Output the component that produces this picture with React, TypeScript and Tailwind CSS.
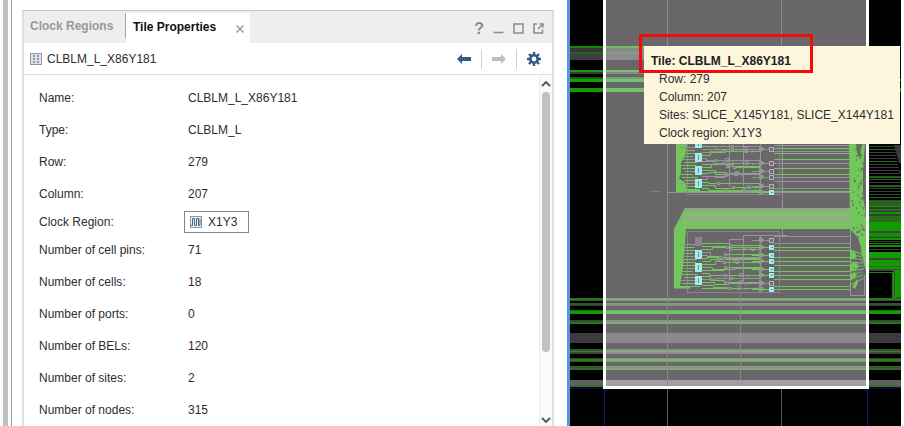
import React from "react";

const GREEN = "#72c75b";
const GREY = "#98939a";
const CYAN = "#a3ece9";

type Band = [y: number, height: number, color: string];

const leftBands: Band[] = [
  [46, 2, "#128a06"], [48, 4, "#38363a"], [52, 2, "#1c6a12"], [54, 6, "#403e42"],
  [70, 2, "#14a006"], [72, 2, "#39373b"], [77, 2, "#1c5c14"], [79, 3, "#12a004"], [88, 4, "#129c04"],
];

const bottomBands: Band[] = [
  [298, 1, "#2a7418"], [299, 1, "#178c08"], [300, 1, "#444"], [303, 2, "#375031"], [305, 1, "#2c4426"],
  [310, 1, "#167c0a"], [311, 3, "#129c04"], [320, 2, "#3c443a"], [322, 2, "#1f7c10"], [333, 10, "#3d3b3f"],
  [349, 2, "#44483f"], [351, 1, "#22900c"], [352, 2, "#3d453a"], [358, 1, "#36482f"], [359, 2, "#228010"],
  [361, 1, "#39532f"], [366, 1, "#24780f"], [367, 1, "#3c443a"], [368, 2, "#36632c"],
  [380, 5, "#626063"], [385, 2, "#3b6e2d"], [387, 2, "#080a40"],
];

const rightBands: Band[] = [
  [201, 1, "#168806"], [202, 1, "#303d2c"], [203, 1, "#128006"], [204, 2, "#29611b"], [206, 1, "#149402"],
  [207, 2, "#383a37"], [209, 2, "#207313"], [211, 1, "#353436"], [212, 2, "#149402"], [214, 2, "#393a39"],
  [216, 1, "#158408"], [217, 5, "#2e6a1c"], [222, 9, "#129c02"], [231, 2, "#3c4638"], [233, 4, "#129002"],
  [237, 1, "#393739"], [238, 2, "#149402"], [241, 1, "#39373a"], [243, 1, "#129402"], [245, 2, "#149402"],
  [249, 1, "#3d3b3e"], [252, 6, "#129c02"], [258, 2, "#40433e"], [260, 6, "#129c02"], [266, 1, "#276716"],
  [267, 2, "#129c02"], [269, 2, "#444245"],
];

const upperLines: Band[] = [
  [145, 1, GREY], [148, 1, GREEN], [151, 1, GREY], [153, 1, GREEN], [159, 1, GREEN], [163, 1, GREY], [168, 1, GREEN],
  [174, 1, GREEN], [177, 1, GREY], [181, 1, GREY], [188, 1, GREY], [191, 1, GREEN],
];

const lowerLines: Band[] = [
  [236, 1, GREY], [243, 1, GREY], [247, 1, GREEN], [250, 1, GREEN], [257, 1, GREEN], [261, 1, GREEN], [265, 1, GREEN],
  [271, 1, GREEN], [275, 1, GREEN], [279, 1, GREEN], [286, 1, GREEN], [289, 1, GREEN],
];

function Bands({ bands, x, width }: { bands: Band[]; x: number; width: number }) {
  return (
    <>
      {bands.map(([y, h, color]) => (
        <rect key={y} x={x} y={y} width={width} height={h} fill={color} />
      ))}
    </>
  );
}

function seeded(seed: number) {
  let s = seed;
  return () => {
    s = (s * 16807) % 2147483647;
    return s / 2147483647;
  };
}

/* Orthogonal nets between the LUT column and the flip-flop column. */
function Wiring({ top, bottom, seed }: { top: number; bottom: number; seed: number }) {
  const next = seeded(seed);
  for (let i = 0; i < 5; i++) next();
  const nets: React.ReactNode[] = [];
  const gates: React.ReactNode[] = [];
  for (let y = top; y <= bottom; y += 3) {
    const a = Math.round(706 + next() * 10);
    const b = Math.round(a + 8 + next() * 14);
    const c = Math.round(b + 8 + next() * 16);
    const clamp = (v: number) => Math.min(bottom, Math.max(top, v));
    const y1 = clamp(y + Math.round(next() * 8 - 4));
    const y2 = clamp(y1 + Math.round(next() * 6 - 3));
    nets.push(
      <path key={y} d={`M702 ${y + 0.5}H${a + 0.5}V${y1 + 0.5}H${b + 0.5}V${y2 + 0.5}H760`} stroke={next() > 0.35 ? GREEN : GREY} />,
    );
    gates.push(<rect key={`a${y}`} x={b + 0.5} y={y2 - 0.5} width={2} height={2} stroke={GREY} fill="#716d72" />);
    if (next() > 0.5) {
      gates.push(<path key={`c${y}`} d={`M${c + 0.5} ${y2 - 1.5}h3v3h-3zM${c + 4} ${y2 + 0.5}h4v2`} stroke={GREY} />);
    }
  }
  return <g fill="none">{nets}{gates}</g>;
}

function Slice({ top, bottom, seed, cells, flops }: {
  top: number;
  bottom: number;
  seed: number;
  cells: [number, number, string][];
  flops: [number, string][];
}) {
  const stubs: number[] = [];
  for (let y = top + 13; y < bottom - 3; y += 3) stubs.push(y);
  return (
    <g>
      <rect x={687.5} y={top + 0.5} width={92} height={bottom - top} fill="none" stroke="#89848b" />
      {stubs.map((y, i) => (
        <rect key={y} x={680 + (i % 3) * 2} y={y} width={16 - (i % 2) * 3} height={1} fill={i % 4 ? GREEN : GREY} />
      ))}
      <Wiring top={top + 12} bottom={bottom - 4} seed={seed} />
      <path
        d={`M729.5 ${top + 8}V${bottom - 8}M730 ${top + 8.5}H744M743.5 ${top + 4}V${bottom - 8}M760.5 ${top + 5}V${bottom - 4}M744 ${top + 4.5}H787`}
        stroke={GREY}
        fill="none"
      />
      {flops.map(([y]) => (
        <path key={y} d={`M759.5 ${y - 2.5}l4 1.5v2l-4 1.5z`} stroke={GREY} fill="#7fae74" />
      ))}
      {flops.map(([y, color]) => (
        <path key={y} d={`M752 ${y + 0.5}h8M763 ${y + 0.5}h6`} stroke={color === CYAN ? GREEN : GREY} />
      ))}
      {cells.map(([y, h, color]) => (
        <g key={y}>
          <rect x={695.5} y={y + 0.5} width={6} height={h - 1} fill={color} stroke={color} />
          <path d={`M698.5 ${y + 2}v${h - 4}`} stroke="#66969b" />
        </g>
      ))}
      {flops.map(([y, color]) => (
        <g key={y}>
          <rect x={769.5} y={y - 1.5} width={4} height={4} fill={color} stroke={color === CYAN ? CYAN : "#b5b0b7"} />
          {color === CYAN && <rect x={771} y={y} width={2} height={1} fill="#59979c" />}
        </g>
      ))}
    </g>
  );
}

function Device() {
  const next = seeded(71);
  const specks = Array.from({ length: 46 }, () => {
    const y = 148 + next() * 88;
    return [851 + next() * 13, y, 0.8 + next() * 1.2];
  });
  const fine: number[] = [];
  for (let y = 146; y < 201; y += 3) fine.push(y);
  const spokes = [250, 254, 258, 262, 266, 271, 275, 280, 285];
  return (
    <svg
      className="block h-full w-full bg-black"
      viewBox="570 0 331 426"
      preserveAspectRatio="xMidYMin slice"
      role="img"
      aria-label="Device view"
    >
      <Bands bands={leftBands} x={570} width={170} />
      <Bands bands={bottomBands} x={570} width={331} />
      <Bands bands={rightBands} x={869} width={32} />

      {fine.map((y, i) => (
        <rect key={y} x={869} y={y} width={Math.min(32, 25 + i * 0.7)} height={1} fill={i % 6 === 5 ? "#1b7110" : "#3d3b3f"} />
      ))}
      <path d="M869 149.5H895.5V145M869 177.5H901M869 186.5H901M899 172H901" stroke="#168006" fill="none" />
      <path d="M894 145h7v18h-2z" fill="#3c3a3e" />
      <rect x={899} y={46} width={2} height={1} fill="#14a006" />
      <rect x={899} y={79} width={2} height={2} fill="#14a006" />
      <rect x={899} y={88} width={2} height={4} fill="#14a006" />
      <rect x={869} y={273} width={22} height={25} fill="#000" />
      <rect x={893} y={270} width={8} height={28} fill="#129c02" />
      <path d="M869 272.5H892.5V298" stroke="#277a18" fill="none" />
      <path d="M894.5 298V270M896 297.5H901" stroke="#47444a" fill="none" />
      <path d="M604.5 389V426M867.5 389V426" stroke="#15127c" />
      <path d="M667.5 389V426M781.5 389V426" stroke="#5a585c" />

      <rect x={605} y={0} width={262} height={387} fill="#fffaff" fillOpacity={0.41} />

      <path d="M667.5 0V387M781.5 0V46M740.5 293V380" stroke="#8d898f" />
      <path d="M782.5 144V208M782.5 229V235M668 192.5H850" stroke={GREY} />
      <path d="M650 191.5H660" stroke="#56a344" />

      <Bands bands={upperLines} x={774} width={77} />
      <Bands bands={lowerLines} x={774} width={77} />
      <path d="M687 191.5H850" stroke={GREEN} />

      <path d="M676 144H687L685 156 681 163V172L679 179 686 183V190H700V192H676Z" fill={GREEN} />
      <path d="M685 208 674 229V288.5H690V286H680L683 268 686 229H850V208Z" fill={GREEN} />
      <path d="M685 208H850V211H684Z" fill="#96a092" />
      <path d="M683 214.5H850M683 221.5H850" stroke="#83bc74" strokeWidth={2} />
      <path d="M682 218H850" stroke="#93ad8b" strokeWidth={4} />
      <path d="M681 224.5H850" stroke="#8bb47e" />

      <Slice
        top={134}
        bottom={194}
        seed={1201}
        cells={[[140, 8, CYAN], [153, 9, CYAN], [166, 9, CYAN], [179, 9, CYAN]]}
        flops={[[149, "#716d72"], [163, "#716d72"], [171, "#716d72"], [177, "#716d72"], [186, "#716d72"], [192, CYAN]]}
      />
      <Slice
        top={231}
        bottom={292}
        seed={907}
        cells={[[237, 9, "#8b868d"], [250, 9, CYAN], [263, 9, CYAN], [276, 9, CYAN]]}
        flops={[[240, "#716d72"], [247, CYAN], [255, CYAN], [261, CYAN], [269, CYAN], [275, CYAN], [283, "#716d72"], [289, CYAN]]}
      />

      <path d="M850.5 192V295.5H864.5V275" stroke={GREY} fill="none" />
      <path
        d="M849 144H856L857 152 860 160 861 148 863 144H865L863 172 863 196 866 215V270L862 262 861 248 858 238 850 229Z"
        fill={GREEN}
      />
      {specks.map(([x, y, s], i) => (
        <rect key={i} x={x} y={y} width={s} height={s + 0.4} fill={i % 3 ? "#5e7459" : "#777279"} />
      ))}
      <path d="M864 198l2 4M864 214l2 3M865 175v12M861 224l4 7" stroke="#706c71" />
      {spokes.map((y, i) => (
        <path key={y} d={`M850 ${y}L${862 + (i % 3)} ${254 + i * 3}`} stroke={GREEN} />
      ))}
      <path d="M850 250l5 2 2 5-7 3zM850 264l6-2 3 4-4 5h-5zM850 274l5-2 2 4-7 4zM852 287l5-8 1 4-3 6z" fill={GREEN} />
      <path d="M856 254l3 6M858 268l4-3M856 278l4-6M862 256l2 12M853 268l2 1" stroke="#716b73" />

      <path d="M604.5 0V387.5H867.5V0" stroke="#fff" strokeWidth={3} fill="none" />
    </svg>
  );
}

function TileIcon() {
  return (
    <svg width="12" height="12" viewBox="0 0 12 12" fill="none" aria-hidden="true">
      <rect x="0.5" y="0.5" width="11" height="11" fill="#dfe4ec" stroke="#8c97a8" />
      <path d="M3 2h2v2H3zM7 2h2v2H7zM3 5h2v2H3zM7 5h2v2H7zM3 8h2v2H3zM7 8h2v2H7z" fill="#8f98a0" />
    </svg>
  );
}

function RegionIcon() {
  return (
    <svg width="12" height="12" viewBox="0 0 12 12" fill="none" aria-hidden="true">
      <rect x="0.5" y="0.5" width="11" height="11" fill="#edf3fa" stroke="#8796a8" />
      <path d="M1 9.5h1.5v-7h2v7h2v-7h2v7h1.5v-7" stroke="#486480" />
    </svg>
  );
}

function Arrow({ right = false }: { right?: boolean }) {
  return (
    <svg width="14" height="10" viewBox="0 0 14 10" aria-hidden="true">
      <path
        d={right ? "M14 5 9 0V3H0V7H9V10Z" : "M0 5 5 0V3H14V7H5V10Z"}
        fill={right ? "#bebebe" : "#36598c"}
      />
    </svg>
  );
}

function Gear() {
  return (
    <svg width="14" height="14" viewBox="0 0 14 14" fill="none" stroke="#36598c" aria-hidden="true">
      <path d="M7 0V3M7 11V14M0 7H3M11 7H14M2 2L4 4M10 10L12 12M12 2L10 4M4 10L2 12" strokeWidth="2.4" />
      <circle cx="7" cy="7" r="3.7" strokeWidth="2.6" />
    </svg>
  );
}

function Chevron({ down = false }: { down?: boolean }) {
  return (
    <svg width="10" height="6" viewBox="0 0 10 6" fill="none" stroke="#555" strokeWidth="1.8" aria-hidden="true">
      <path d={down ? "M1 1l4 4 4-4" : "M1 5l4-4 4 4"} />
    </svg>
  );
}

const properties: [string, string][] = [
  ["Name", "CLBLM_L_X86Y181"],
  ["Type", "CLBLM_L"],
  ["Row", "279"],
  ["Column", "207"],
  ["Clock Region", "X1Y3"],
  ["Number of cell pins", "71"],
  ["Number of cells", "18"],
  ["Number of ports", "0"],
  ["Number of BELs", "120"],
  ["Number of sites", "2"],
  ["Number of nodes", "315"],
];

function PropertiesPanel() {
  return (
    <section className="mt-[10px] mr-[13px] ml-[10px] flex min-w-0 flex-1 flex-col border-x-2 border-t border-x-[#dedee2] border-t-[#c8c8c8]">
      <header className="flex h-8 shrink-0 items-stretch bg-[#eeeeef] text-xs font-bold">
        <div role="tablist" className="flex">
          <div className="flex w-[102px] pt-[2px] pb-[5px]">
            <button role="tab" aria-selected="false" className="w-full border-r border-[#a5a5a5] pl-[6px] text-left text-[#999]">
              Clock Regions
            </button>
          </div>
          <div className="mt-[2px] flex w-[124px] items-center justify-between bg-white pr-[5px] pl-[7px]">
            <button role="tab" aria-selected="true" className="pb-[3px] text-[#111]">
              Tile Properties
            </button>
            <button aria-label="Close tab" className="pt-px">
              <svg width="10" height="10" viewBox="0 0 10 10" stroke="#999" strokeWidth="1.4" aria-hidden="true">
                <path d="M1.5 1.5l7 7M8.5 1.5l-7 7" />
              </svg>
            </button>
          </div>
        </div>
        <div className="ml-auto flex items-center gap-[9px] pt-[3px] pr-[8px] text-[#8b8b8b]">
          <button aria-label="Help" className="text-base leading-4">?</button>
          <button aria-label="Minimize">
            <svg width="11" height="10" viewBox="0 0 11 10" stroke="#8b8b8b" strokeWidth="1.5" aria-hidden="true">
              <path d="M0.5 8.5H10.5" />
            </svg>
          </button>
          <button aria-label="Maximize">
            <svg width="11" height="11" viewBox="0 0 11 11" fill="none" stroke="#8b8b8b" strokeWidth="1.5" aria-hidden="true">
              <rect x="1" y="1" width="9" height="9" />
            </svg>
          </button>
          <button aria-label="Float">
            <svg width="11" height="11" viewBox="0 0 11 11" fill="none" stroke="#8b8b8b" strokeWidth="1.5" aria-hidden="true">
              <path d="M4 1H1V10H9.5V6.5M5 6L9 2M6.5 1H10V4.5" />
            </svg>
          </button>
        </div>
      </header>

      <div className="flex h-8 shrink-0 items-center border-b border-[#dedee0] pr-[11px] pl-[6px]">
        <TileIcon />
        <span className="pl-[5px]">CLBLM_L_X86Y181</span>
        <div className="ml-auto flex items-center gap-[10px]">
          <button aria-label="Previous"><Arrow /></button>
          <span className="h-5 w-px bg-[#ccd2dd]" />
          <button aria-label="Next" disabled><Arrow right /></button>
          <span className="h-5 w-px bg-[#ccd2dd]" />
          <button aria-label="Settings"><Gear /></button>
        </div>
      </div>

      <div className="flex min-h-0 flex-1">
        <div className="min-w-0 flex-1 overflow-hidden pt-[7px] pl-[15px]">
          <table className="w-full table-fixed border-collapse">
            <tbody>
              {properties.map(([name, value]) => (
                <tr key={name} className={name === "Clock Region" ? "h-6" : "h-8"}>
                  <th scope="row" className="w-[145px] p-0 text-left font-normal">{name}:</th>
                  <td className={name === "Clock Region" ? "p-0" : "p-0 pl-[4px]"}>
                    {name === "Clock Region" ? (
                      <button className="flex h-[22px] w-[65px] items-center gap-[6px] border border-[#85858a] pl-[5px]">
                        <RegionIcon />
                        {value}
                      </button>
                    ) : (
                      value
                    )}
                  </td>
                </tr>
              ))}
            </tbody>
          </table>
        </div>
        <div className="flex w-[13px] shrink-0 flex-col items-center border-l border-[#ededf0] bg-[#fafafa] pt-[6px] pb-[3px]">
          <button aria-label="Scroll up"><Chevron /></button>
          <div className="flex w-full flex-1 justify-center pt-[5px]">
            <div className="h-4/5 w-2 rounded-full bg-[#c1c1c1]" />
          </div>
          <button aria-label="Scroll down"><Chevron down /></button>
        </div>
      </div>
    </section>
  );
}

export default function App() {
  return (
    <main className="flex h-screen overflow-hidden bg-white pl-[3px] font-['Liberation_Sans',Arial,sans-serif] text-xs text-[#2d2d30]">
      <div className="w-[9px] shrink-0 border-r border-l-[5px] border-r-[#9a9a9f] border-l-[#c1c1c1]" />
      <PropertiesPanel />
      <section className="relative mr-[3px] w-[334px] shrink-0 border-l-[3px] border-[#5795e3]">
        <Device />
        <div role="tooltip" className="absolute top-[46px] left-[74px] h-[98px] w-[256px] bg-[#fdf5dc] pt-[6px] pl-[7px] leading-[18px] whitespace-nowrap">
          <p className="font-bold text-[#222]">Tile: CLBLM_L_X86Y181</p>
          <div className="pl-[8px]">
            <p>Row: 279</p>
            <p>Column: 207</p>
            <p>Sites: SLICE_X145Y181, SLICE_X144Y181</p>
            <p>Clock region: X1Y3</p>
          </div>
        </div>
        <div className="absolute top-[34px] left-[69px] h-[39px] w-[174px] border-[3px] border-[#f80808]" />
      </section>
    </main>
  );
}
